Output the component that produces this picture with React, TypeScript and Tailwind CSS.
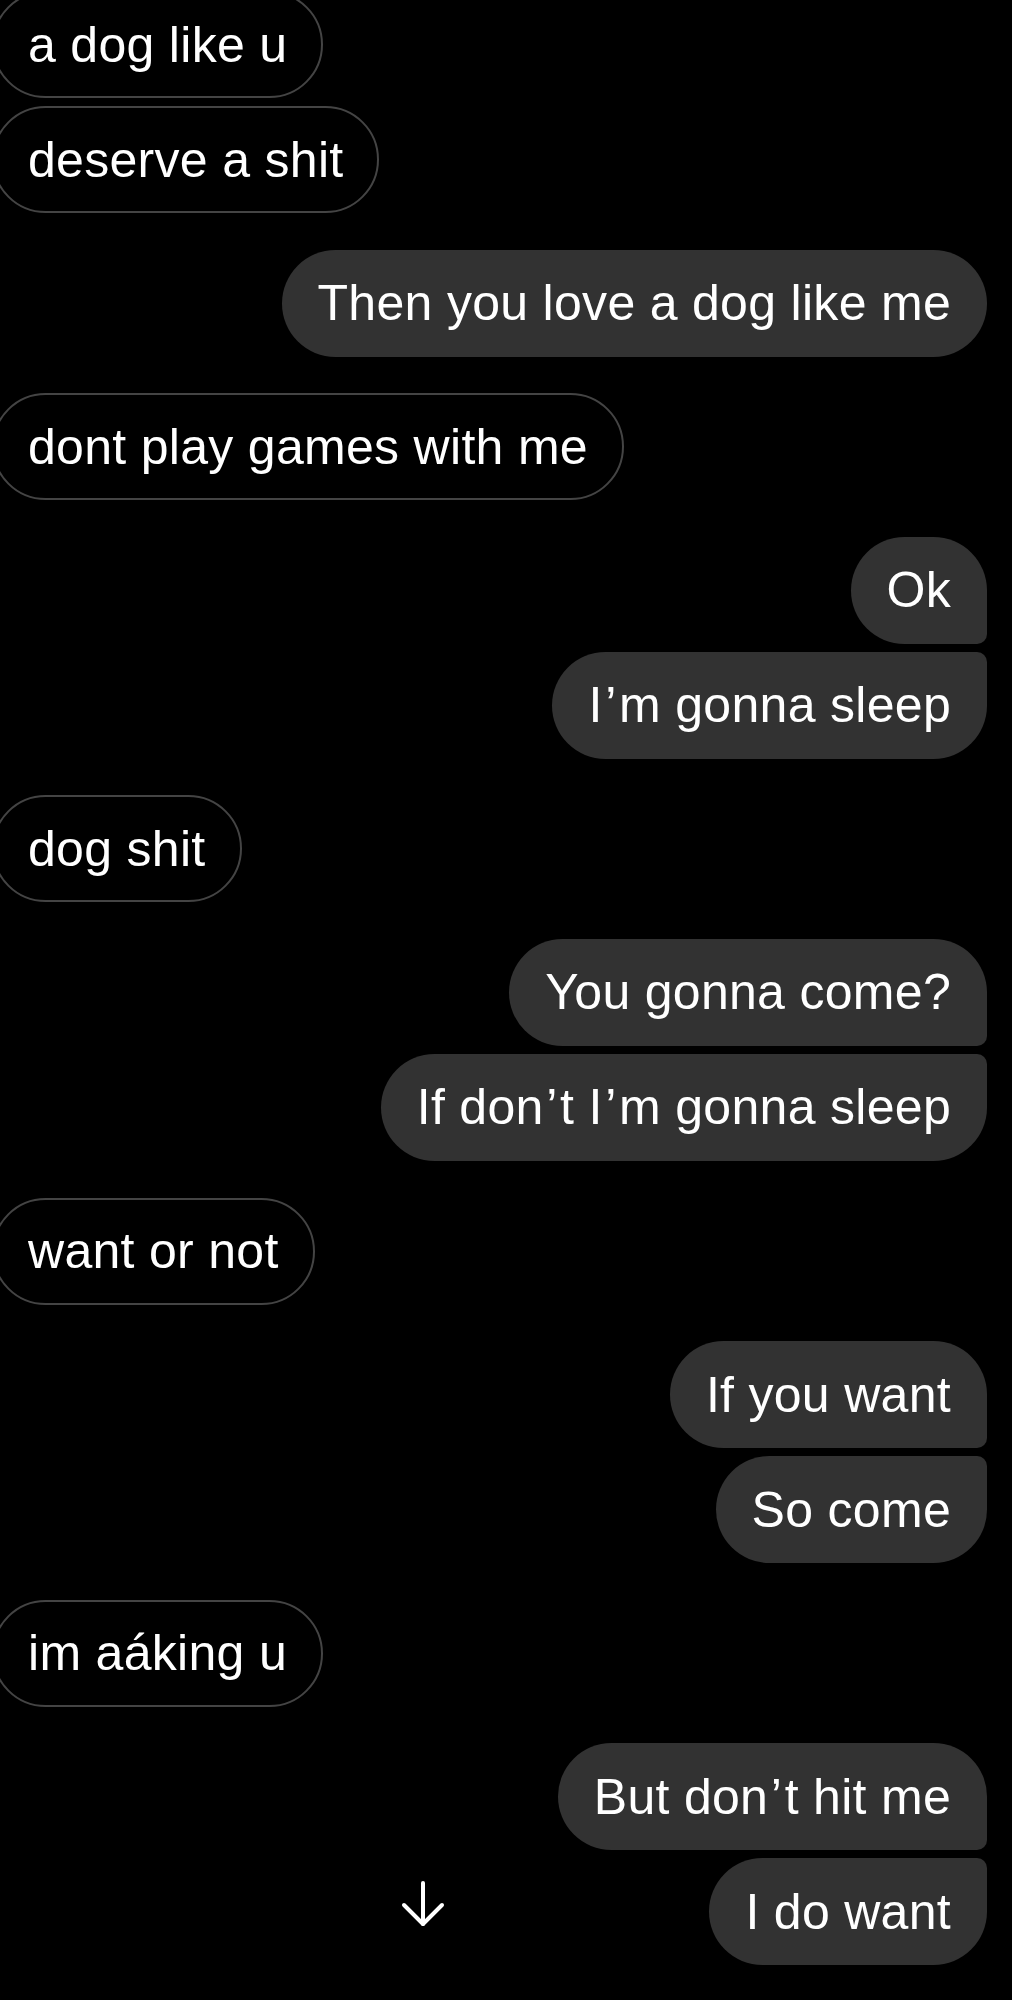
import React from 'react'

type Msg = {
  text: string
  mine: boolean
  // position inside a group of my messages: solo, first or last
  pos?: 'solo' | 'first' | 'last'
  // gap above this bubble: small inside a group, big between turns
  gap: 'none' | 'small' | 'big'
}

const MESSAGES: Msg[] = [
  { text: 'a dog like u', mine: false, gap: 'none' },
  { text: 'deserve a shit', mine: false, gap: 'small' },
  { text: 'Then you love a dog like me', mine: true, pos: 'solo', gap: 'big' },
  { text: 'dont play games with me', mine: false, gap: 'big' },
  { text: 'Ok', mine: true, pos: 'first', gap: 'big' },
  { text: 'I’m gonna sleep', mine: true, pos: 'last', gap: 'small' },
  { text: 'dog shit', mine: false, gap: 'big' },
  { text: 'You gonna come?', mine: true, pos: 'first', gap: 'big' },
  { text: 'If don’t I’m gonna sleep', mine: true, pos: 'last', gap: 'small' },
  { text: 'want or not', mine: false, gap: 'big' },
  { text: 'If you want', mine: true, pos: 'first', gap: 'big' },
  { text: 'So come', mine: true, pos: 'last', gap: 'small' },
  { text: 'im aáking u', mine: false, gap: 'big' },
  { text: 'But don’t hit me', mine: true, pos: 'first', gap: 'big' },
  { text: 'I do want', mine: true, pos: 'last', gap: 'small' },
]

const gapClass = {
  none: '-mt-[9px]',
  small: 'mt-[8px]',
  big: 'mt-[36.6px]',
}

const cornerClass = {
  solo: 'rounded-[54px]',
  first: 'rounded-[54px] rounded-br-[10px]',
  last: 'rounded-[54px] rounded-tr-[10px]',
}

// the phone font draws a wider apostrophe than Liberation Sans
function Text({ value }: { value: string }) {
  const parts = value.split('’')
  return (
    <>
      {parts.map((p, i) => (
        <React.Fragment key={i}>
          {i > 0 && <span className="px-[2.5px]">’</span>}
          {p}
        </React.Fragment>
      ))}
    </>
  )
}

function Bubble({ msg }: { msg: Msg }) {
  if (msg.mine) {
    return (
      <div className={`flex justify-end ${gapClass[msg.gap]}`}>
        <div
          className={`h-[107px] flex items-center px-[36px] bg-[#323232] text-white text-[50px] leading-none tracking-[0.3px] whitespace-nowrap ${cornerClass[msg.pos ?? 'solo']}`}
        >
          <span>
            <Text value={msg.text} />
          </span>
        </div>
      </div>
    )
  }

  return (
    <div className={`flex justify-start ${gapClass[msg.gap]}`}>
      <div className="-ml-[8px] h-[107px] flex items-center px-[34px] border-2 border-[#444444] rounded-[54px] text-white text-[50px] leading-none tracking-[0.3px] whitespace-nowrap">
        {msg.text}
      </div>
    </div>
  )
}

export default function App() {
  return (
    <div
      className="relative min-h-[2000px] w-full bg-black overflow-hidden pr-[25px]"
      style={{ fontFamily: '"Liberation Sans", Arial, sans-serif' }}
    >
      <div className="flex flex-col">
        {MESSAGES.map((m, i) => (
          <Bubble key={i} msg={m} />
        ))}
      </div>

      {/* scroll to latest */}
      <div className="absolute left-[401px] top-[1880px] w-[44px] h-[48px]">
        <svg viewBox="0 0 44 48" className="w-full h-full" fill="none" stroke="white" strokeWidth="4" strokeLinecap="round" strokeLinejoin="round">
          <path d="M22 3 V44" />
          <path d="M3 25 L22 44 L41 25" />
        </svg>
      </div>
    </div>
  )
}
